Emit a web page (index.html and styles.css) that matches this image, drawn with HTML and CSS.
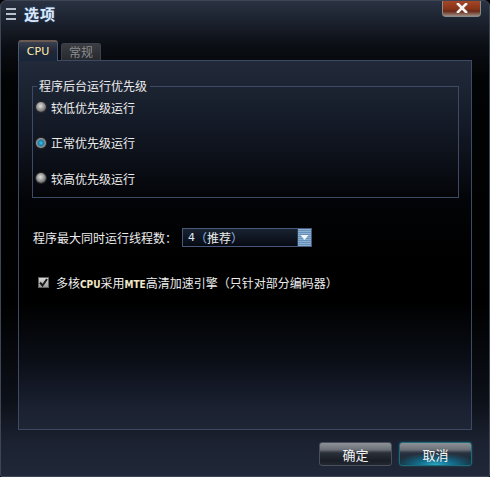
FILE: index.html
```html
<!DOCTYPE html>
<html>
<head>
<meta charset="utf-8">
<link rel="stylesheet" href="styles.css">
</head>
<body>
<div class="window">
  <div class="titlebar">
    <div class="title"><span class="menu-icon"><i></i><i></i><i></i></span><span class="title-text">选项</span></div>
    <div class="close">
      <svg width="12" height="10" viewBox="0 0 12 10"><path d="M2 1 L10 9 M10 1 L2 9" stroke="#f4f4f4" stroke-width="2.6" stroke-linecap="square"/></svg>
    </div>
  </div>
  <div class="tabs">
    <div class="tab active">CPU</div>
    <div class="tab">常规</div>
  </div>
  <div class="panel">
    <fieldset class="group">
      <legend>程序后台运行优先级</legend>
      <label class="radio-row"><span class="radio"></span>较低优先级运行</label>
      <label class="radio-row"><span class="radio checked"></span>正常优先级运行</label>
      <label class="radio-row"><span class="radio"></span>较高优先级运行</label>
    </fieldset>
    <div class="thread-row">
      <span>程序最大同时运行线程数：</span>
      <div class="select">
        <span class="select-value"><b>4</b><em>（</em>推荐<em>）</em></span>
        <span class="select-btn">
          <svg width="13" height="16" viewBox="0 0 13 16"><path d="M2.5 6 L10.5 6 L6.5 11 Z" fill="#f0f6fc"/></svg>
        </span>
      </div>
    </div>
    <div class="check-row">
      <span class="checkbox">
        <svg width="9" height="9" viewBox="0 0 9 9"><path d="M1 4.5 L3.5 7.5 L8 1" fill="none" stroke="#1a1a1a" stroke-width="2"/></svg>
      </span>
      <span>多核<span class="en">CPU</span>采用<span class="en">MTE</span>高清加速引擎（只针对部分编码器）</span>
    </div>
  </div>
  <div class="footer">
    <button class="btn">确定</button>
    <button class="btn primary">取消</button>
  </div>
</div>
</body>
</html>
```
FILE: styles.css
```css
* { box-sizing: border-box; }
html, body { margin: 0; padding: 0; background: #000; }
body {
  font-family: "Noto Sans CJK SC", "DejaVu Sans", sans-serif;
  font-size: 12px;
  color: #e6e6e6;
}
.window {
  width: 490px;
  height: 477px;
  border: 1px solid #3e4656;
  border-radius: 6px 6px 2px 2px;
  background: linear-gradient(to bottom, #2a3242 0, #1a202c 22px, #0b0e14 45px, #020304 80px, #000 300px, #0c1018 400px, #1b2130 440px, #202839 100%);
  display: flex;
  flex-direction: column;
  overflow: hidden;
}
.titlebar {
  height: 39px;
  display: flex;
  justify-content: space-between;
  align-items: flex-start;
  padding: 0 8px 0 5px;
}
.title {
  display: flex;
  align-items: center;
  gap: 8px;
  padding-top: 4px;
}
.menu-icon {
  display: flex;
  flex-direction: column;
  gap: 3px;
  width: 10px;
}
.menu-icon i {
  display: block;
  height: 2px;
  background: #b8c0cc;
}
.title-text {
  font-size: 15px;
  font-weight: bold;
  line-height: 18px;
  color: #dde8f8;
  letter-spacing: 1px;
  text-shadow: 0 0 2px #3a6aa0;
}
.close {
  width: 39px;
  height: 17px;
  margin-top: -1px;
  border: 1px solid #8a8a8a;
  border-top: none;
  border-radius: 0 0 4px 4px;
  background: linear-gradient(to bottom, #a84a2a 0, #8a3418 55%, #6a2a18 70%, #9a8a80 100%);
  display: flex;
  align-items: center;
  justify-content: center;
}
.tabs {
  display: flex;
  align-items: flex-end;
  gap: 3px;
  padding-left: 17px;
  height: 20px;
}
.tab {
  width: 40px;
  height: 17px;
  border: 1px solid #3a4252;
  border-bottom: none;
  border-radius: 3px 3px 0 0;
  background: linear-gradient(to bottom, #3a3c40 0, #26292e 100%);
  color: #8a8c90;
  display: flex;
  align-items: center;
  justify-content: center;
  line-height: 1;
}
.tab.active {
  width: 40px;
  height: 21px;
  border-color: #4a5872;
  border-top: 2px solid #6a5a52;
  background: linear-gradient(to bottom, #3a4050 0, #1e2838 50%, #182438 100%);
  color: #ffeeb0;
  font-family: "DejaVu Sans", sans-serif;
  font-size: 11px;
  margin-bottom: -1px;
  position: relative;
  z-index: 1;
}
.panel {
  margin-left: 17px;
  width: 454px;
  height: 370px;
  border: 1px solid #3c4a66;
  background: linear-gradient(to bottom, #222a3a 0, #121824 70px, #030407 140px, #000 200px, #000 240px, #0a0e16 300px, #1a2030 345px, #1e2636 100%);
  padding: 18px 12px 0 13px;
  display: flex;
  flex-direction: column;
}
.group {
  margin: 0;
  padding: 4px 0 0 3px;
  border: 1px solid #3c4a66;
  height: 119px;
  display: flex;
  flex-direction: column;
  gap: 15.5px;
  min-width: 0;
}
.group legend {
  padding: 0 3px 0 2px;
  margin-left: 1px;
  line-height: 14px;
  color: #ececec;
}
.radio-row {
  height: 20px;
  flex: none;
  display: flex;
  align-items: center;
  gap: 5px;
  color: #ececec;
}
.radio {
  width: 10px;
  height: 10px;
  border-radius: 50%;
  background: radial-gradient(circle at 45% 40%, #e0e0e0 0, #a8a8a8 35%, #6a6a6a 70%, #3a3a3a 100%);
  box-shadow: 0 0 0 1px #2a2a2a;
}
.radio.checked {
  background: radial-gradient(circle at 50% 50%, #40c8f0 0, #1880b0 35%, #7a8890 55%, #b0b0b0 75%, #505050 100%);
}
.thread-row {
  display: flex;
  align-items: center;
  margin-top: 29px;
  padding-left: 1px;
  height: 20px;
  color: #ececec;
}
.thread-row > span { width: 149px; }
.select {
  width: 130px;
  height: 19px;
  border: 1px solid #48587a;
  background: linear-gradient(to bottom, #1a2232 0, #060a12 100%);
  display: flex;
  align-items: stretch;
}
.select-value {
  flex: 1;
  padding-left: 5px;
  display: flex;
  align-items: center;
  color: #eaeaea;
}
.select-value b {
  font-family: "DejaVu Sans", sans-serif;
  font-weight: normal;
  font-size: 11px;
  color: #d8e8f8;
}
.select-value em {
  font-style: normal;
  color: #8ab8e8;
}
.select-btn {
  width: 14px;
  background: repeating-linear-gradient(to bottom, #8ab0d0 0, #8ab0d0 1px, #6890b8 1px, #6890b8 2px);
  display: flex;
  align-items: center;
  justify-content: center;
  border-left: 1px solid #2a3a58;
}
.check-row {
  display: flex;
  align-items: center;
  gap: 7px;
  margin-top: 25px;
  padding-left: 6px;
  height: 20px;
  color: #ececec;
}
.check-row .en {
  font-family: "DejaVu Sans Condensed", "DejaVu Sans", sans-serif;
  font-size: 10px;
  font-weight: bold;
  color: #f0e8c8;
}
.checkbox {
  width: 11px;
  height: 11px;
  background: linear-gradient(to bottom, #d8d8d8, #9a9a9a);
  border: 1px solid #606060;
  display: flex;
  align-items: center;
  justify-content: center;
}
.footer {
  display: flex;
  justify-content: flex-end;
  gap: 7px;
  padding: 12px 17px 0 0;
}
.btn {
  width: 73px;
  height: 24px;
  border: 1px solid #4a505a;
  border-radius: 3px;
  background: linear-gradient(to bottom, #8e9298 0, #6c7078 30%, #2a3038 45%, #1a1e26 80%, #222832 100%);
  color: #f4f4f4;
  font-family: "Noto Sans CJK SC", sans-serif;
  font-size: 13px;
  padding: 0;
  line-height: 1;
}
.btn.primary {
  border-color: #1e6a78;
  background: radial-gradient(ellipse 60% 55% at 50% 100%, #2aa8c8 0, #137090 40%, rgba(20,40,60,0) 100%), linear-gradient(to bottom, #8e9298 0, #6c7078 30%, #283240 45%, #18222e 100%);
  box-shadow: 0 0 2px #1a6070;
}
```
